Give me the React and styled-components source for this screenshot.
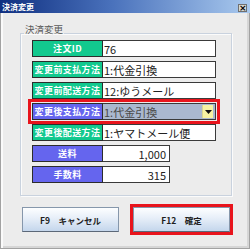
import React from "react";
import styled, { createGlobalStyle } from "styled-components";

const GlobalStyle = createGlobalStyle`
  html, body {
    margin: 0;
    padding: 0;
    background: #ececec;
  }
  * {
    box-sizing: border-box;
  }
`;

const rows = [
  { label: "注文ID", value: "76", tone: "green" },
  { label: "変更前支払方法", value: "1:代金引換", tone: "green" },
  { label: "変更前配送方法", value: "12:ゆうメール", tone: "green" },
  { label: "変更後支払方法", value: "1:代金引換", tone: "blue", select: true },
  { label: "変更後配送方法", value: "1:ヤマトメール便", tone: "green" },
  { label: "送料", value: "1,000", tone: "blue", number: true },
  { label: "手数料", value: "315", tone: "blue", number: true },
];

function App() {
  return (
    <Window>
      <GlobalStyle />
      <TitleBar>
        <Title>決済変更</Title>
        <CloseButton>×</CloseButton>
      </TitleBar>
      <Body>
        <GroupBox>
          <GroupTitle>決済変更</GroupTitle>
          <RowList>
            {rows.map((r) => (
              <Row key={r.label} $highlight={r.select}>
                <Label $tone={r.tone}>{r.label}</Label>
                {r.select ? (
                  <Select>
                    <span>{r.value}</span>
                    <DropButton>
                      <svg width="7" height="4" viewBox="0 0 7 4">
                        <path d="M0 0h7L3.5 4z" fill="#111" />
                      </svg>
                    </DropButton>
                  </Select>
                ) : (
                  <Value $number={r.number}>{r.value}</Value>
                )}
              </Row>
            ))}
          </RowList>
        </GroupBox>
        <ButtonRow>
          <Button>F9　キャンセル</Button>
          <Button $primary>F12　確定</Button>
        </ButtonRow>
      </Body>
    </Window>
  );
}

export default App;

const Window = styled.div`
  width: 250px;
  height: 249px;
  display: flex;
  flex-direction: column;
  font-family: "Noto Sans CJK JP", "Noto Sans", sans-serif;
  background: #ececec;
`;

const TitleBar = styled.div`
  height: 13px;
  display: flex;
  align-items: center;
  justify-content: space-between;
  padding: 0 3px 0 2px;
  background: linear-gradient(to right, #0f2f80 0%, #4a72bc 45%, #a9c9ee 100%);
`;

const Title = styled.div`
  color: #fff;
  font-size: 8px;
  font-weight: bold;
  line-height: 9px;
`;

const CloseButton = styled.div`
  width: 9px;
  height: 8px;
  margin-top: 2px;
  background: #d8d8d0;
  border: 1px solid #707070;
  color: #000;
  font-size: 9px;
  font-weight: bold;
  line-height: 6px;
  text-align: center;
  font-family: "DejaVu Sans", sans-serif;
`;

const Body = styled.div`
  flex: 1;
  padding: 20px 18px 0 19px;
  border: 1px solid #a2a2a2;
  border-top: none;
  box-shadow: inset 2px 0 0 #fafafa, inset -2px -2px 0 #d6d6d6;
`;

const GroupBox = styled.div`
  width: 212px;
  height: 163px;
  border: 1px solid #c9d2de;
  box-shadow: 1px 1px 0 #fbfbfb, inset 1px 1px 0 #fbfbfb;
  padding: 0 0 0 11px;
`;

const GroupTitle = styled.div`
  width: fit-content;
  margin: -10px 0 0 -8px;
  padding: 0 1px;
  background: #ececec;
  color: #5a5a5a;
  font-size: 9.5px;
  line-height: 10px;
`;

const RowList = styled.div`
  display: flex;
  flex-direction: column;
  gap: 4px;
  margin-top: 6px;
`;

const Row = styled.div`
  display: flex;
  height: 17px;
  width: fit-content;
  outline: ${(p) => (p.$highlight ? "3px solid #e8141c" : "none")};
  outline-offset: 1px;
`;

const Label = styled.div`
  width: 71px;
  display: flex;
  align-items: center;
  justify-content: center;
  background: ${(p) => (p.$tone === "blue" ? "#6565ee" : "#12c98e")};
  border: 1px solid #2c2c2c;
  color: #fff;
  font-size: 9px;
  font-weight: bold;
  letter-spacing: 0.4px;
  white-space: nowrap;
`;

const Value = styled.div`
  width: ${(p) => (p.$number ? "67px" : "113px")};
  display: flex;
  align-items: center;
  justify-content: ${(p) => (p.$number ? "flex-end" : "flex-start")};
  padding: 0 3px 0 1px;
  background: #fff;
  border: 1px solid #3a3a3a;
  border-left: none;
  color: #222;
  font-size: 11px;
  white-space: nowrap;
`;

const Select = styled(Value)`
  justify-content: space-between;
  padding-right: 2px;
  background: #aab8cf;
  color: #4a4a4a;
`;

const DropButton = styled.div`
  width: 11px;
  height: 13px;
  display: flex;
  align-items: center;
  justify-content: center;
  background: #f6f3a2;
  border-left: 1px solid #d8d690;
`;

const ButtonRow = styled.div`
  display: flex;
  gap: 14px;
  margin: 11px 0 0 2px;
`;

const Button = styled.div`
  width: 97px;
  height: 25px;
  display: flex;
  align-items: center;
  justify-content: center;
  background: linear-gradient(to bottom, #fdfeff 0%, #e6eef8 45%, #c4d6ec 100%);
  border: 1px solid #8697ab;
  border-bottom-color: #5c6878;
  color: #1e1e1e;
  font-size: 8.5px;
  font-weight: bold;
  outline: ${(p) => (p.$primary ? "3px solid #e8141c" : "none")};
  outline-offset: 0;
`;
